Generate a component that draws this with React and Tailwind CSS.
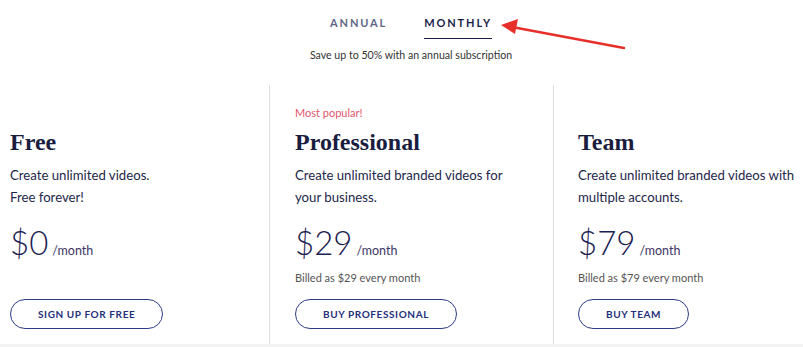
import React from "react";

const plans = [
  {
    name: "Free",
    desc: ["Create unlimited videos.", "Free forever!"],
    price: "$0",
    billed: null,
    cta: "SIGN UP FOR FREE",
    popular: false,
    col: "pl-[10px] pr-4",
  },
  {
    name: "Professional",
    desc: ["Create unlimited branded videos for", "your business."],
    price: "$29",
    billed: "Billed as $29 every month",
    cta: "BUY PROFESSIONAL",
    popular: true,
    col: "pl-[25px] pr-4 border-l border-[#dedede]",
  },
  {
    name: "Team",
    desc: ["Create unlimited branded videos with", "multiple accounts."],
    price: "$79",
    billed: "Billed as $79 every month",
    cta: "BUY TEAM",
    popular: false,
    col: "pl-[24px] pr-2 border-l border-[#dedede]",
  },
];

function Plan({ p }) {
  return (
    <div className={`flex flex-col pt-[21px] ${p.col}`}>
      <div className="h-[14px] text-[11px] leading-[14px] text-[#e0566c] font-['Lato',sans-serif]">
        {p.popular ? "Most popular!" : ""}
      </div>
      <h2 className="mt-[7px] text-[24px] leading-[30px] font-bold text-[#1b1d40] font-['Liberation_Serif',serif]">
        {p.name}
      </h2>
      <div className="mt-[7px] text-[13.2px] leading-[22px] text-[#23264a] font-['Lato',sans-serif] h-[44px]">
        {p.desc.map((d) => (
          <div key={d}>{d}</div>
        ))}
      </div>
      <div className="mt-[16px] flex items-baseline h-[36px] font-['Lato',sans-serif]">
        <span className="text-[33px] leading-[36px] font-light text-[#1c2152]">{p.price}</span>
        <span className="ml-[4px] text-[12.5px] text-[#3d3464]">/month</span>
      </div>
      <div className="mt-[10px] h-[16px] text-[11px] leading-[16px] text-[#555] font-['Lato',sans-serif]">
        {p.billed || ""}
      </div>
      <div className="mt-[13px]">
        <button className="h-[30px] px-[27px] rounded-full border border-[#2d3c88] text-[10px] font-bold tracking-[0.06em] text-[#1f2f7c] font-['Lato',sans-serif] bg-white">
          {p.cta}
        </button>
      </div>
    </div>
  );
}

export default function App() {
  return (
    <div className="relative w-[803px] h-[347px] bg-white overflow-hidden">
      <div className="flex flex-col items-center pl-[19px] pt-[15px]">
        <div className="flex gap-[37px] text-[11px] font-bold tracking-[0.17em] font-['Lato',sans-serif]">
          <span className="text-[#5f6685] pb-[6px] border-b border-transparent">ANNUAL</span>
          <span className="text-[#1a1e4a] pb-[6px] border-b border-[#1a1e4a]">MONTHLY</span>
        </div>
        <div className="mt-[9px] text-[10.6px] text-[#333] font-['Lato',sans-serif]">
          Save up to 50% with an annual subscription
        </div>
      </div>
      <div className="mt-[22px] grid grid-cols-[269px_284px_1fr] h-[263px]">
        {plans.map((p) => (
          <Plan key={p.name} p={p} />
        ))}
      </div>
      <div className="absolute left-0 right-0 bottom-0 h-[3px] bg-[#f3f3f3]" />
      <svg className="absolute left-0 top-0 pointer-events-none" width="803" height="80">
        <line x1="624" y1="48" x2="512" y2="27" stroke="#e8302a" strokeWidth="2.5" strokeLinecap="round" />
        <polygon points="501,25 518,19 515,34" fill="#e8302a" />
      </svg>
    </div>
  );
}
